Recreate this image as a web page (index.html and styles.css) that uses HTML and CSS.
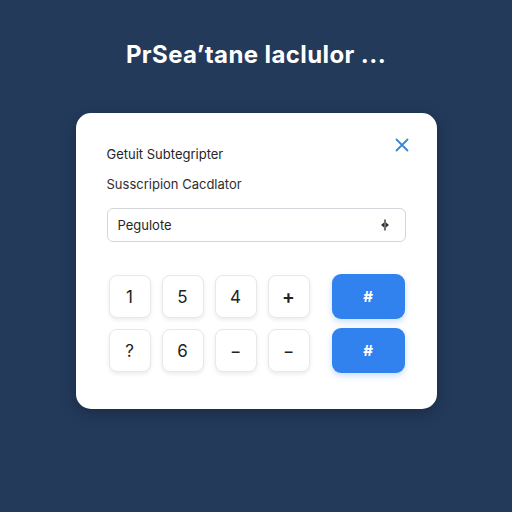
FILE: index.html
```html
<!DOCTYPE html>
<html lang="en">
<head>
    <meta charset="UTF-8">
    <meta name="viewport" content="width=device-width, initial-scale=1.0">
    <title>Subscription Calculator</title>
    <link rel="stylesheet" href="styles.css">
</head>
<body>
    <h1 class="page-title">PrSea&#x2019;tane laclulor ...</h1>

    <div class="card">
        <div class="card-header">
            <h2 class="card-title">Getuit Subtegripter</h2>
            <button class="close-btn" aria-label="Close">
                <svg width="14" height="14" viewBox="0 0 14 14">
                    <path d="M1.5 1.5 L12.5 12.5 M12.5 1.5 L1.5 12.5" stroke="#3a86d6" stroke-width="1.8" stroke-linecap="round" fill="none"/>
                </svg>
            </button>
        </div>
        <p class="card-subtitle">Susscripion Cacdlator</p>

        <div class="field">
            <span class="field-value">Pegulote</span>
            <svg class="field-icon" width="12" height="12" viewBox="0 0 12 12">
                <path d="M6 1 V11" stroke="#333" stroke-width="1.4" stroke-linecap="round"/>
                <path d="M2 6 L5 3.5 V8.5 Z M10 6 L7 3.5 V8.5 Z" fill="#333"/>
            </svg>
        </div>

        <div class="keypad">
            <div class="keys">
                <button class="key">1</button>
                <button class="key">5</button>
                <button class="key">4</button>
                <button class="key key-op">+</button>
                <button class="key">?</button>
                <button class="key">6</button>
                <button class="key">&minus;</button>
                <button class="key">&minus;</button>
            </div>
            <div class="actions">
                <button class="action">#</button>
                <button class="action">#</button>
            </div>
        </div>
    </div>
</body>
</html>
```

FILE: styles.css
```css
body {
    margin: 0;
    min-height: 512px;
    background-color: #233a5b;
    font-family: Inter, "Open Sans", sans-serif;
    display: flex;
    flex-direction: column;
    align-items: center;
}

.page-title {
    margin: 40px 0 0;
    color: #fff;
    font-size: 24px;
    font-weight: 700;
    line-height: 30px;
    letter-spacing: 0.4px;
}

.card {
    box-sizing: border-box;
    width: 361px;
    height: 296px;
    margin-top: 43px;
    padding: 24px 31px 0;
    background-color: #fff;
    border-radius: 15px;
    box-shadow: 0 4px 16px rgba(0, 0, 0, 0.25);
}

.card-header {
    display: flex;
    justify-content: space-between;
    align-items: flex-start;
}

.card-title {
    margin: 10px 0 0;
    font-size: 13px;
    font-weight: 400;
    line-height: 14px;
    color: #262626;
}

.close-btn {
    border: none;
    background: none;
    padding: 1px 0 0;
    margin-right: -4px;
    width: 16px;
    height: 16px;
    cursor: pointer;
}

.card-subtitle {
    margin: 16px 0 0;
    font-size: 13px;
    line-height: 14px;
    color: #2e2e2e;
}

.field {
    margin-top: 17px;
    height: 34px;
    box-sizing: border-box;
    border: 1px solid #d3d7dc;
    border-radius: 6px;
    padding: 0 14px 0 10px;
    display: flex;
    align-items: center;
    justify-content: space-between;
}

.field-value {
    font-size: 13px;
    color: #262626;
}

.keypad {
    margin-top: 32px;
    padding-left: 2px;
    display: flex;
    gap: 22px;
}

.keys {
    display: grid;
    grid-template-columns: repeat(4, 42px);
    grid-auto-rows: 43px;
    column-gap: 11px;
    row-gap: 11px;
    padding-top: 1px;
}

.key {
    border: 1px solid #e8e8e8;
    border-radius: 8px;
    background-color: #fff;
    box-shadow: 0 2px 4px rgba(0, 0, 0, 0.08);
    font-family: Inter, sans-serif;
    font-size: 17px;
    color: #222;
    padding: 0;
    cursor: pointer;
}

.key-op {
    font-size: 19px;
    font-weight: 600;
}

.actions {
    display: flex;
    flex-direction: column;
    gap: 9px;
}

.action {
    width: 73px;
    height: 45px;
    border: none;
    border-radius: 9px;
    background-color: #3182ef;
    box-shadow: 0 3px 6px rgba(49, 130, 239, 0.25);
    color: #fff;
    font-family: Inter, sans-serif;
    font-size: 15px;
    font-weight: 700;
    cursor: pointer;
}
```
